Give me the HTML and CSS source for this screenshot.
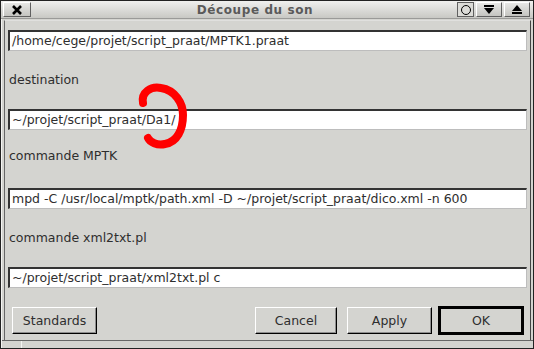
FILE: index.html
```html
<!DOCTYPE html>
<html>
<head>
<meta charset="utf-8">
<link rel="stylesheet" href="styles.css">
</head>
<body>
<div class="window">
  <div class="titlebar">
    <div class="tbtn close">
      <svg width="12" height="10" viewBox="0 0 12 10"><path d="M2 1 L10 9 M10 1 L2 9" stroke="#000" stroke-width="2.6"/></svg>
    </div>
    <div class="title">Découpe du son</div>
    <div class="tbtn small">
      <svg width="12" height="12" viewBox="0 0 12 12"><circle cx="6" cy="6" r="4.5" fill="none" stroke="#000" stroke-width="1"/></svg>
    </div>
    <div class="tbtn">
      <svg width="12" height="10" viewBox="0 0 12 10"><rect x="1" y="0" width="10" height="2" fill="#000"/><path d="M1 3 H11 L6 9 Z" fill="#000"/></svg>
    </div>
    <div class="tbtn">
      <svg width="12" height="10" viewBox="0 0 12 10"><path d="M1 6 H11 L6 0 Z" fill="#000"/><rect x="1" y="7" width="10" height="2" fill="#000"/></svg>
    </div>
  </div>
  <div class="frame">
    <div class="panel">
      <div class="field">/home/cege/projet/script_praat/MPTK1.praat</div>
      <div class="label l1">destination</div>
      <div class="field">~/projet/script_praat/Da1/</div>
      <div class="label l2">commande MPTK</div>
      <div class="field">mpd -C /usr/local/mptk/path.xml -D ~/projet/script_praat/dico.xml -n 600</div>
      <div class="label l3">commande xml2txt.pl</div>
      <div class="field">~/projet/script_praat/xml2txt.pl c</div>
      <div class="buttons">
        <div class="btn std">Standards</div>
        <div class="spacer"></div>
        <div class="btn cancel">Cancel</div>
        <div class="btn">Apply</div>
        <div class="btn ok">OK</div>
      </div>
    </div>
    <div class="bottom"><div class="notch"></div></div>
  </div>
  <svg class="scribble" width="60" height="72" viewBox="0 0 60 72">
    <path d="M8 22 C6 11 16 5 26 7 C40 9 48 22 48 34 C48 49 42 61 30 63 C22 65 15 61 13 57" fill="none" stroke="#ff0000" stroke-width="8" stroke-linecap="round" stroke-linejoin="round"/>
  </svg>
</div>
</body>
</html>
```
FILE: styles.css
```css
* { box-sizing: border-box; }
html, body { margin: 0; padding: 0; background: #000; }
body { font-family: "DejaVu Sans", sans-serif; font-size: 12.5px; color: #2e2e2e; }
.window {
  position: relative;
  width: 534px; height: 349px;
  background: #d4d4d0;
  border: 1px solid #222;
  display: flex; flex-direction: column;
  overflow: hidden;
}
.titlebar {
  height: 18px;
  display: flex; align-items: stretch;
  padding: 1px 3px 0 2px;
  gap: 2px;
  background: linear-gradient(#f0f0ee, #c8c8c4);
  border-bottom: 1px solid #9a9a98;
}
.tbtn {
  width: 26px;
  display: flex; align-items: center; justify-content: center;
  border: 1px solid #606060;
  border-top-color: #fff; border-left-color: #fff;
  background: linear-gradient(#e8e8e6, #c4c4c0);
  margin-bottom: 1px;
}
.tbtn.small { width: 17px; border: 1px solid #606060; background: #dcdcd8; }
.close { width: 28px; }
.title {
  flex: 1;
  text-align: center;
  font-weight: bold;
  font-size: 12px;
  color: #5a5a5a;
  line-height: 16px;
  letter-spacing: 0.6px;
  padding-left: 22px;
}
.frame {
  flex: 1;
  display: flex; flex-direction: column;
  padding: 1px 2px 0 2px;
  border-left: 1px solid #f4f4f2;
}
.panel {
  flex: 1;
  border-left: 1px solid #666;
  border-top: 1px solid #e0e0de;
  border-right: 1px solid #444;
  padding: 9px 3px 0 3px;
  display: flex; flex-direction: column;
}
.field {
  height: 21px;
  background: #fff;
  border: 1px solid #bdbdbd;
  border-top: 2px solid #333;
  border-left: 2px solid #333;
  padding-left: 2px;
  line-height: 18px;
  white-space: nowrap;
  overflow: hidden;
}
.label {
  height: 58px;
  padding-top: 20px;
  line-height: 16px;
  padding-left: 1px;
}
.label.l1 { padding-top: 21px; }
.label.l2 { padding-top: 18px; }
.label.l3 { padding-top: 21px; }
.buttons {
  display: flex;
  margin-top: 19px;
  padding: 0 3px 0 4px;
  gap: 10px;
}
.spacer { flex: 1; }
.btn {
  width: 85px; height: 27px;
  border: 1px solid #000;
  border-top-color: #fff; border-left-color: #fff;
  box-shadow: inset -1px -1px 0 #8e8e8e;
  display: flex; align-items: center; justify-content: center;
  background: #d4d4d0;
}
.btn.cancel { width: 82px; }
.btn.ok {
  margin-left: -4px;
  width: 86px; height: 29px; margin-top: -1px;
  border: 3px solid #000;
  box-shadow: none;
}
.bottom {
  height: 8px;
  border-top: 1px solid #666;
  position: relative;
  margin: 0 -2px;
}
.notch {
  position: absolute; left: 19px; top: 0; width: 1px; height: 7px; background: #f4f4f2;
}
.scribble { position: absolute; left: 134px; top: 80px; }
```
